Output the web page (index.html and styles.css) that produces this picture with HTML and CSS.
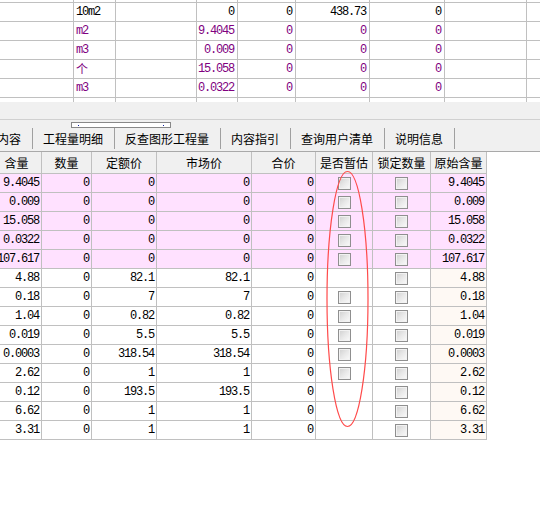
FILE: index.html
```html
<!DOCTYPE html>
<html>
<head>
<meta charset="utf-8">
<link rel="stylesheet" href="styles.css">
</head>
<body>
<div class="top">
  <div class="trow stub"><div></div><div></div><div></div><div></div><div></div><div></div><div></div><div></div><div class="fill"></div></div>
  <div class="trow"><div></div><div class="l">10m2</div><div></div><div>0</div><div>0</div><div>438.73</div><div>0</div><div></div><div class="fill"></div></div>
  <div class="trow purple"><div></div><div class="l">m2</div><div></div><div>9.4045</div><div>0</div><div>0</div><div>0</div><div></div><div class="fill"></div></div>
  <div class="trow purple"><div></div><div class="l">m3</div><div></div><div>0.009</div><div>0</div><div>0</div><div>0</div><div></div><div class="fill"></div></div>
  <div class="trow purple"><div></div><div class="l cjk">个</div><div></div><div>15.058</div><div>0</div><div>0</div><div>0</div><div></div><div class="fill"></div></div>
  <div class="trow purple"><div></div><div class="l">m3</div><div></div><div>0.0322</div><div>0</div><div>0</div><div>0</div><div></div><div class="fill"></div></div>
  <div class="trow tail"><div></div><div></div><div></div><div></div><div></div><div></div><div></div><div></div><div class="fill"></div></div>
</div>
<div class="band"></div>
<div class="scroll"><div class="thumb"><i></i><i></i></div></div>
<div class="tabs">
  <div class="tab first">内容</div>
  <div class="tab">工程量明细</div>
  <div class="tab">反查图形工程量</div>
  <div class="tab">内容指引</div>
  <div class="tab">查询用户清单</div>
  <div class="tab">说明信息</div>
  <div class="tab end"></div>
</div>
<div class="grid">
  <div class="brow head"><div>含量</div><div>数量</div><div>定额价</div><div>市场价</div><div>合价</div><div>是否暂估</div><div>锁定数量</div><div>原始含量</div></div>
  <div class="brow pink"><div>9.4045</div><div>0</div><div>0</div><div>0</div><div>0</div><div class="c"><span class="cb"></span></div><div class="c"><span class="cb"></span></div><div class="orig">9.4045</div></div>
  <div class="brow pink"><div>0.009</div><div>0</div><div>0</div><div>0</div><div>0</div><div class="c"><span class="cb"></span></div><div class="c"><span class="cb"></span></div><div class="orig">0.009</div></div>
  <div class="brow pink"><div>15.058</div><div>0</div><div>0</div><div>0</div><div>0</div><div class="c"><span class="cb"></span></div><div class="c"><span class="cb"></span></div><div class="orig">15.058</div></div>
  <div class="brow pink"><div>0.0322</div><div>0</div><div>0</div><div>0</div><div>0</div><div class="c"><span class="cb"></span></div><div class="c"><span class="cb"></span></div><div class="orig">0.0322</div></div>
  <div class="brow pink"><div>107.617</div><div>0</div><div>0</div><div>0</div><div>0</div><div class="c"><span class="cb"></span></div><div class="c"><span class="cb"></span></div><div class="orig">107.617</div></div>
  <div class="brow"><div>4.88</div><div>0</div><div>82.1</div><div>82.1</div><div>0</div><div class="c"></div><div class="c"><span class="cb"></span></div><div class="orig">4.88</div></div>
  <div class="brow"><div>0.18</div><div>0</div><div>7</div><div>7</div><div>0</div><div class="c"><span class="cb"></span></div><div class="c"><span class="cb"></span></div><div class="orig">0.18</div></div>
  <div class="brow"><div>1.04</div><div>0</div><div>0.82</div><div>0.82</div><div>0</div><div class="c"><span class="cb"></span></div><div class="c"><span class="cb"></span></div><div class="orig">1.04</div></div>
  <div class="brow"><div>0.019</div><div>0</div><div>5.5</div><div>5.5</div><div>0</div><div class="c"><span class="cb"></span></div><div class="c"><span class="cb"></span></div><div class="orig">0.019</div></div>
  <div class="brow"><div>0.0003</div><div>0</div><div>318.54</div><div>318.54</div><div>0</div><div class="c"><span class="cb"></span></div><div class="c"><span class="cb"></span></div><div class="orig">0.0003</div></div>
  <div class="brow"><div>2.62</div><div>0</div><div>1</div><div>1</div><div>0</div><div class="c"><span class="cb"></span></div><div class="c"><span class="cb"></span></div><div class="orig">2.62</div></div>
  <div class="brow"><div>0.12</div><div>0</div><div>193.5</div><div>193.5</div><div>0</div><div class="c"></div><div class="c"><span class="cb"></span></div><div class="orig">0.12</div></div>
  <div class="brow"><div>6.62</div><div>0</div><div>1</div><div>1</div><div>0</div><div class="c"></div><div class="c"><span class="cb"></span></div><div class="orig">6.62</div></div>
  <div class="brow"><div>3.31</div><div>0</div><div>1</div><div>1</div><div>0</div><div class="c"></div><div class="c"><span class="cb"></span></div><div class="orig">3.31</div></div>
</div>
<svg class="mark" width="540" height="507" viewBox="0 0 540 507">
  <ellipse cx="347.5" cy="299" rx="20.5" ry="127.5" fill="none" stroke="#ff4a4a" stroke-width="1.2"/>
</svg>
</body>
</html>
```
FILE: styles.css
```css
html, body {
  margin: 0;
  padding: 0;
}
body {
  width: 540px;
  height: 507px;
  overflow: hidden;
  position: relative;
  background: #ffffff;
  font-family: "Liberation Mono", "Noto Sans CJK SC", monospace;
  font-size: 12px;
  letter-spacing: -1.2px;
  color: #000;
}
.top {
  height: 102px;
  overflow: hidden;
}
.trow {
  display: grid;
  grid-template-columns: 74px 42px 81px 41px 58px 74px 75px 82px 1fr;
  height: 19px;
}
.trow > div {
  box-sizing: border-box;
  border-right: 1px solid #c0c0c0;
  border-bottom: 1px solid #c0c0c0;
  line-height: 18px;
  text-align: right;
  padding: 0 3px 0 0;
  white-space: nowrap;
}
.trow > div.l {
  text-align: left;
  padding: 0 0 0 2px;
}
.trow > div.fill {
  border-right: none;
}
.cjk {
  font-family: "Noto Sans CJK SC", sans-serif;
  font-size: 12px;
  letter-spacing: 0;
}
.trow.stub {
  height: 3px;
}
.trow.tail {
  height: 4px;
}
.trow.tail > div {
  border-bottom: none;
}
.purple {
  color: #800080;
}
.band {
  height: 17px;
  background: #f0f0f0;
  border-bottom: 1px solid #d0d0d0;
}
.scroll {
  height: 8px;
  background: #f0f0f0;
  padding-top: 2px;
  box-sizing: border-box;
}
.thumb {
  margin-left: 71px;
  width: 100px;
  height: 6px;
  box-sizing: border-box;
  border: 1px solid #888;
  background: #fff;
  display: flex;
  justify-content: space-between;
  align-items: center;
  padding: 0 6px;
}
.thumb i {
  display: block;
  width: 1px;
  height: 1px;
  background: #1020a0;
}
.tabs {
  height: 24px;
  box-sizing: border-box;
  background: #f0f0f0;
  border-bottom: 1px solid #a9a9a9;
  display: flex;
  align-items: flex-start;
  font-family: "Noto Sans CJK SC", sans-serif;
  font-size: 12px;
  letter-spacing: 0;
}
.tab {
  height: 21px;
  line-height: 22px;
  padding: 0 10.5px;
  border-left: 1px solid #a0a0a0;
  white-space: nowrap;
}
.tab.first {
  border-left: none;
  padding-left: 0;
  margin-left: -3px;
}
.tab.end {
  padding: 0;
}
.grid {
  margin-left: -8px;
}
.brow {
  display: grid;
  grid-template-columns: 50px 50px 65px 95px 64px 57px 58px 56px;
  height: 19px;
}
.brow > div {
  box-sizing: border-box;
  border-right: 1px solid #c0c0c0;
  border-bottom: 1px solid #c0c0c0;
  line-height: 18px;
  text-align: right;
  padding-right: 2px;
  white-space: nowrap;
  overflow: hidden;
}
.brow > div.orig {
  background: #fef9f4;
}
.brow > div.c {
  display: flex;
  align-items: center;
  justify-content: center;
  padding: 0;
}
.brow.pink > div,
.brow.pink > div.orig {
  background: #ffe1ff;
}
.brow.head {
  height: 22px;
}
.brow.head > div {
  background: #f0f0f0;
  font-family: "Noto Sans CJK SC", sans-serif;
  font-size: 12px;
  letter-spacing: 0;
  line-height: 21px;
  text-align: center;
  padding: 0;
}
.cb {
  display: block;
  width: 13px;
  height: 13px;
  box-sizing: border-box;
  border: 1px solid #8f8f8f;
  background: linear-gradient(135deg, #cfcfcf 0%, #e8e8e8 50%, #fbfbfb 100%);
  box-shadow: inset 0 0 0 1px #f2f2f2;
}
.mark {
  position: absolute;
  left: 0;
  top: 0;
  pointer-events: none;
}
```
